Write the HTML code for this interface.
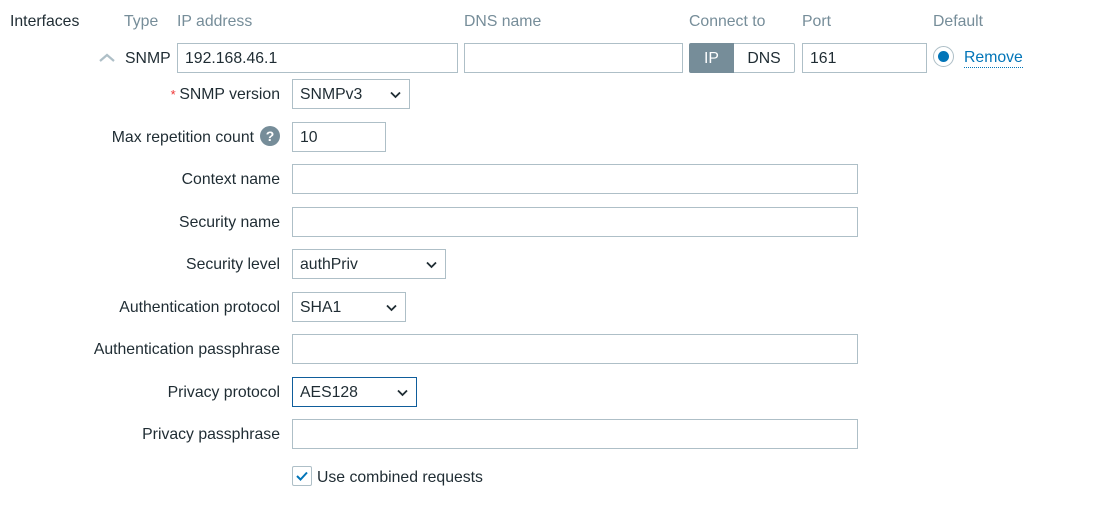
<!DOCTYPE html>
<html><head><meta charset="utf-8"><style>
body{margin:0;width:1095px;height:506px;background:#fff;font-family:"Liberation Sans",Arial,sans-serif;font-size:15.8px;color:#1f2c33;position:relative;overflow:hidden}
.a{position:absolute}
.h{color:#768d99;top:13px}
.in{position:absolute;box-sizing:border-box;border:1px solid #aebfc7;background:#fff;height:30px;padding-left:7px;line-height:29px}
.lbl{position:absolute;right:815px;text-align:right;white-space:nowrap}
.sel svg{position:absolute;right:8px;top:11px}
</style></head><body>
<div class="a" style="left:10px;top:13px">Interfaces</div>
<div class="a h" style="left:124px">Type</div>
<div class="a h" style="left:177px">IP address</div>
<div class="a h" style="left:464px">DNS name</div>
<div class="a h" style="left:689px">Connect to</div>
<div class="a h" style="left:802px">Port</div>
<div class="a h" style="left:933px">Default</div>

<svg class="a" style="left:98px;top:52px" width="18" height="12"><path d="M2 9 L9 3 L16 9" stroke="#aebfc7" stroke-width="2.2" fill="none"/></svg>
<div class="a" style="left:125px;top:50px">SNMP</div>
<div class="in" style="left:177px;top:43px;width:281px">192.168.46.1</div>
<div class="in" style="left:464px;top:43px;width:219px"></div>
<div class="a" style="left:689px;top:43px;width:45px;height:30px;background:#768d99;color:#fff;text-align:center;line-height:31px;border-radius:2px 0 0 2px">IP</div>
<div class="a" style="left:734px;top:43px;width:61px;height:30px;box-sizing:border-box;border:1px solid #aebfc7;border-left:none;text-align:center;line-height:29px;border-radius:0 2px 2px 0">DNS</div>
<div class="in" style="left:802px;top:43px;width:125px">161</div>
<div class="a" style="left:933px;top:46px;width:21px;height:21px;border:1px solid #aebfc7;border-radius:50%;box-sizing:border-box"></div>
<div class="a" style="left:938px;top:51px;width:11px;height:11px;background:#0275b8;border-radius:50%"></div>
<div class="a" style="left:964px;top:49px;color:#0275b8;border-bottom:1px dotted #0275b8;line-height:18px">Remove</div>

<div class="lbl" style="top:86px"><span style="color:#e33;font-size:13px">* </span>SNMP version</div>
<div class="in sel" style="left:292px;top:79px;width:118px">SNMPv3<svg width="11" height="8"><path d="M1 1.5 L5.5 6 L10 1.5" stroke="#1f2c33" stroke-width="1.8" fill="none"/></svg></div>

<div class="lbl" style="top:129px;right:841px">Max repetition count</div>
<div class="a" style="left:260px;top:126px;width:20px;height:20px;border-radius:50%;background:#768d99;color:#fff;font-weight:bold;font-size:14px;text-align:center;line-height:20px">?</div>
<div class="in" style="left:292px;top:122px;width:94px">10</div>

<div class="lbl" style="top:171px">Context name</div>
<div class="in" style="left:292px;top:164px;width:566px"></div>
<div class="lbl" style="top:214px">Security name</div>
<div class="in" style="left:292px;top:207px;width:566px"></div>
<div class="lbl" style="top:256px">Security level</div>
<div class="in sel" style="left:292px;top:249px;width:154px">authPriv<svg width="11" height="8"><path d="M1 1.5 L5.5 6 L10 1.5" stroke="#1f2c33" stroke-width="1.8" fill="none"/></svg></div>
<div class="lbl" style="top:299px">Authentication protocol</div>
<div class="in sel" style="left:292px;top:292px;width:114px">SHA1<svg width="11" height="8"><path d="M1 1.5 L5.5 6 L10 1.5" stroke="#1f2c33" stroke-width="1.8" fill="none"/></svg></div>
<div class="lbl" style="top:341px">Authentication passphrase</div>
<div class="in" style="left:292px;top:334px;width:566px"></div>
<div class="lbl" style="top:384px">Privacy protocol</div>
<div class="in sel" style="left:292px;top:377px;width:125px;border-color:#0f5d9b">AES128<svg width="11" height="8"><path d="M1 1.5 L5.5 6 L10 1.5" stroke="#1f2c33" stroke-width="1.8" fill="none"/></svg></div>
<div class="lbl" style="top:426px">Privacy passphrase</div>
<div class="in" style="left:292px;top:419px;width:566px"></div>

<div class="a" style="left:292px;top:466px;width:20px;height:20px;box-sizing:border-box;border:1px solid #aebfc7;border-radius:2px"></div>
<svg class="a" style="left:294px;top:468px" width="16" height="16"><path d="M3 8 L6.5 11.5 L13 4.5" stroke="#0275b8" stroke-width="2" fill="none"/></svg>
<div class="a" style="left:317px;top:469px">Use combined requests</div>
</body></html>
